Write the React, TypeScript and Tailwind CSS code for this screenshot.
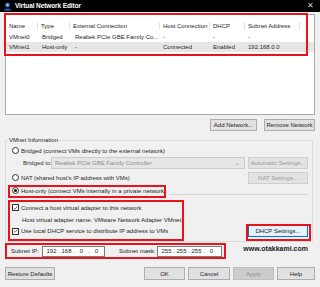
import React from "react";

function Radio({ checked }: { checked?: boolean }) {
  return (
    <span className="w-[7px] h-[7px] rounded-full border border-[#333] bg-white flex items-center justify-center shrink-0">
      {checked && <span className="w-[3px] h-[3px] rounded-full bg-[#111]" />}
    </span>
  );
}

function Check() {
  return (
    <span className="w-[7px] h-[7px] border border-[#333] bg-white shrink-0 flex items-center justify-center">
      <svg width="6" height="6" viewBox="0 0 6 6">
        <path d="M0.8 3.1 L2.4 4.6 L5.2 1.2" stroke="#222" strokeWidth="0.8" fill="none" />
      </svg>
    </span>
  );
}

function Btn({
  children,
  w,
  disabled,
  focused,
}: {
  children: React.ReactNode;
  w: string;
  disabled?: boolean;
  focused?: boolean;
}) {
  const base = "h-[12px] flex items-center justify-center leading-none border whitespace-nowrap " + w;
  const cls = disabled
    ? " bg-[#e3e3e3] border-[#cfcfcf] text-[#9a9a9a]"
    : focused
    ? " bg-[#e5f1fb] border-[#0078d7] text-[#222]"
    : " bg-[#e1e1e1] border-[#adadad] text-[#222]";
  return <div className={base + cls}>{children}</div>;
}

function IpBox({ parts, w }: { parts: string[]; w: string }) {
  return (
    <div className={"h-[11px] bg-white border border-[#7a7a7a] flex items-center pl-[3px] " + w}>
      {parts.map((p, i) => (
        <React.Fragment key={i}>
          <span className="w-[11px] text-center">{p}</span>
          {i < parts.length - 1 && <span className="w-[4px] text-center">.</span>}
        </React.Fragment>
      ))}
    </div>
  );
}

export default function App() {
  const cols = "grid grid-cols-[32px_32px_90px_50px_35px_55px_1fr]";
  return (
    <div className="w-[320px] h-[287px] bg-[#f0f0f0] relative overflow-hidden font-['Liberation_Sans',Arial,sans-serif] text-[6px] leading-[8px] text-[#1e1e1e]">
      {/* title bar */}
      <div className="h-[12px] bg-black flex items-center pl-[3px] pr-[6px]">
        <svg width="9" height="9" viewBox="0 0 9 9">
          <circle cx="4.5" cy="3" r="2.3" fill="#3b7dd8" />
          <circle cx="4.5" cy="3" r="1.1" fill="#9cc6f5" />
          <path d="M1 8.6 C1 5.8 8 5.8 8 8.6 Z" fill="#2a62b8" />
        </svg>
        <span className="ml-[3px] text-white text-[6.5px] font-bold tracking-[-0.1px]">Virtual Network Editor</span>
        <span className="ml-auto text-[#cfcfcf] text-[8px] leading-none">✕</span>
      </div>

      {/* list */}
      <div className="mx-[5px] mt-[2px] h-[101px] bg-white border border-[#a9a9a9]">
        <div className={cols + " h-[17px] items-end pb-[2px]"}>
          {["Name", "Type", "External Connection", "Host Connection", "DHCP", "Subnet Address", ""].map((h, i) => (
            <div key={i} className={"pl-[3px] whitespace-nowrap " + (i < 6 ? "border-r border-[#e3e3e3]" : "")}>
              {h}
            </div>
          ))}
        </div>
        <div className={cols + " h-[10px] items-center"}>
          <div className="pl-[3px]">VMnet0</div>
          <div className="pl-[4px]">Bridged</div>
          <div className="pl-[5px] whitespace-nowrap">Realtek PCIe GBE Family Co...</div>
          <div className="pl-[3px]">-</div>
          <div className="pl-[3px]">-</div>
          <div className="pl-[3px]">-</div>
          <div />
        </div>
        <div className={cols + " h-[10px] items-center bg-[#e6e6e6]"}>
          <div className="pl-[3px]">VMnet1</div>
          <div className="pl-[4px]">Host-only</div>
          <div className="pl-[5px]">-</div>
          <div className="pl-[3px]">Connected</div>
          <div className="pl-[3px]">Enabled</div>
          <div className="pl-[3px]">192.168.0.0</div>
          <div />
        </div>
      </div>

      {/* list buttons */}
      <div className="flex justify-end gap-[7px] pr-[5px] mt-[4px]">
        <Btn w="w-[47px]">Add Network...</Btn>
        <Btn w="w-[51px]">Remove Network</Btn>
      </div>

      {/* VMnet information group */}
      <div className="relative mx-[5px] mr-[7px] mt-[9px] h-[102px] border border-[#dcdcdc] rounded-[1px]">
        <span className="absolute left-[2px] top-[-5px] px-[1px] bg-[#f0f0f0]">VMnet Information</span>
        <div className="flex flex-col pl-[6px] pr-[4px]">
          <div className="h-[9px] mt-[5px] flex items-center gap-[2px]">
            <Radio />
            <span>Bridged (connect VMs directly to the external network)</span>
          </div>
          <div className="h-[12px] mt-[2px] flex items-center">
            <span className="w-[39px] pl-[11px] whitespace-nowrap text-[#333]">Bridged to:</span>
            <div className="w-[194px] h-[12px] bg-[#e6e6e6] border border-[#cccccc] flex items-center pl-[3px] pr-[4px] text-[#8c8c8c]">
              <span>Realtek PCIe GBE Family Controller</span>
              <span className="ml-auto text-[6px]">⌄</span>
            </div>
            <div className="ml-[3px]">
              <Btn w="w-[60px]" disabled>
                Automatic Settings...
              </Btn>
            </div>
          </div>
          <div className="h-[11px] mt-[3px] flex items-center">
            <div className="flex items-center gap-[2px]">
              <Radio />
              <span>NAT (shared host's IP address with VMs)</span>
            </div>
            <div className="ml-auto">
              <Btn w="w-[60px]" disabled>
                NAT Settings...
              </Btn>
            </div>
          </div>
          <div className="h-[9px] mt-[3px] flex items-center">
            <div className="flex items-center gap-[2px]">
              <Radio checked />
              <span>Host-only (connect VMs internally in a private network)</span>
            </div>
            <div className="flex-1 h-px bg-[#d5d5d5] ml-[4px] mt-[7px]" />
          </div>
          <div className="h-[9px] mt-[8px] flex items-center gap-[2px]">
            <Check />
            <span>Connect a host virtual adapter to this network</span>
          </div>
          <div className="h-[9px] mt-[3px] flex items-center pl-[10px]">
            Host virtual adapter name: VMware Network Adapter VMnet1
          </div>
          <div className="h-[12px] mt-[1px] flex items-center">
            <div className="flex items-center gap-[2px]">
              <Check />
              <span>Use local DHCP service to distribute IP address to VMs</span>
            </div>
            <div className="ml-auto">
              <Btn w="w-[60px]" focused>
                DHCP Settings...
              </Btn>
            </div>
          </div>
        </div>
      </div>

      {/* subnet row */}
      <div className="h-[12px] mt-[3px] flex items-center pl-[11px] pr-[12px]">
        <span className="w-[31px]">Subnet IP:</span>
        <IpBox parts={["192", "168", "0", "0"]} w="w-[63px]" />
        <span className="ml-[14px] w-[38px]">Subnet mask:</span>
        <IpBox parts={["255", "255", "255", "0"]} w="w-[65px]" />
        <span className="ml-auto font-bold text-[7px] text-[#222] mt-[-5px]">www.otakkami.com</span>
      </div>

      {/* bottom buttons */}
      <div className="flex items-center mt-[10px] px-[5px]">
        <div className="h-[13px] w-[50px] flex items-center justify-center bg-[#e1e1e1] border border-[#adadad]">
          Restore Defaults
        </div>
        <div className="ml-auto flex gap-[3px]">
          <div className="h-[13px] w-[41px] flex items-center justify-center bg-[#e1e1e1] border border-[#adadad]">OK</div>
          <div className="h-[13px] w-[42px] flex items-center justify-center bg-[#e1e1e1] border border-[#adadad]">Cancel</div>
          <div className="h-[13px] w-[41px] flex items-center justify-center bg-[#cccccc] border border-[#bfbfbf] text-[#8d8d8d]">Apply</div>
          <div className="h-[13px] w-[38px] flex items-center justify-center bg-[#e1e1e1] border border-[#adadad]">Help</div>
        </div>
      </div>

      {/* red annotation boxes (overlay) */}
      <div className="absolute left-[4px] top-[13px] w-[304px] h-[43px] border-2 border-[#e8141c] pointer-events-none" />
      <div className="absolute left-[8px] top-[185px] w-[158px] h-[13px] border-2 border-[#e8141c] pointer-events-none" />
      <div className="absolute left-[8px] top-[200px] w-[176px] h-[41px] border-2 border-[#e8141c] pointer-events-none" />
      <div className="absolute left-[246px] top-[224px] w-[65px] h-[17px] border-2 border-[#e8141c] pointer-events-none" />
      <div className="absolute left-[5px] top-[243px] w-[221px] h-[16px] border-2 border-[#e8141c] pointer-events-none" />
    </div>
  );
}
